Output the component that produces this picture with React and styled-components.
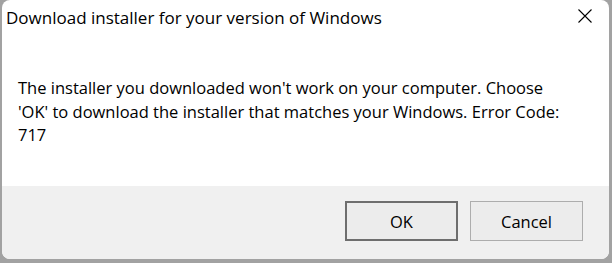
import React from "react";
import styled, { createGlobalStyle } from "styled-components";

const Global = createGlobalStyle`
  html, body { margin: 0; padding: 0; }
  body {
    width: 612px;
    height: 263px;
    overflow: hidden;
    background: #a2a2a2;
    font-family: "Open Sans", "Noto Sans", sans-serif;
  }
`;

const Window = styled.div`
  box-sizing: border-box;
  margin: 0 3px 0 2px;
  height: 259px;
  background: #ffffff;
  border-radius: 8px;
  overflow: hidden;
  display: flex;
  flex-direction: column;
`;

const TitleBar = styled.div`
  height: 38px;
  display: flex;
  align-items: flex-start;
  justify-content: space-between;
`;

const Title = styled.div`
  padding: 6px 0 0 4px;
  font-size: 17px;
  line-height: 24px;
  color: #000;
`;

const Close = styled.div`
  width: 46px;
  height: 32px;
  display: flex;
  align-items: center;
  justify-content: center;
  margin-right: 1px;
`;

const Content = styled.div`
  flex: 1;
  padding: 38px 20px 0 16px;
  font-size: 16.5px;
  line-height: 23.5px;
  color: #000;
`;

const Footer = styled.div`
  height: 73px;
  background: #f0f0f0;
  display: flex;
  justify-content: flex-end;
  align-items: flex-start;
  gap: 12px;
  padding: 15px 26px 0 0;
  box-sizing: border-box;
`;

const Button = styled.button`
  box-sizing: border-box;
  width: 113px;
  height: 40px;
  background: #ececec;
  border: ${(p) => (p.$primary ? "2px solid #6e6e6e" : "1px solid #adadad")};
  border-radius: 0;
  font-family: inherit;
  font-size: 16.5px;
  color: #000;
  padding: 0;
`;

export default function App() {
  return (
    <>
      <Global />
      <Window>
        <TitleBar>
          <Title>Download installer for your version of Windows</Title>
          <Close>
            <svg width="14" height="14" viewBox="0 0 14 14">
              <path d="M0.5 0.5 L13.5 13.5 M13.5 0.5 L0.5 13.5" stroke="#000" strokeWidth="1.1" fill="none" />
            </svg>
          </Close>
        </TitleBar>
        <Content>
          The installer you downloaded won't work on your computer. Choose
          <br />
          'OK' to download the installer that matches your Windows. Error Code:
          <br />
          717
        </Content>
        <Footer>
          <Button $primary>OK</Button>
          <Button>Cancel</Button>
        </Footer>
      </Window>
    </>
  );
}
